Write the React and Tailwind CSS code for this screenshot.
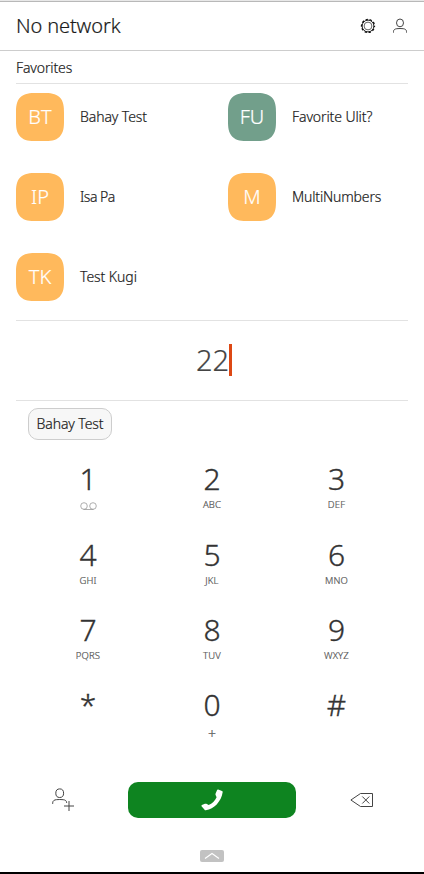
import React from "react";

const favorites = [
  { initials: "BT", name: "Bahay Test", color: "bg-[#ffb95c]", track: "tracking-[-0.1px]" },
  { initials: "FU", name: "Favorite Ulit?", color: "bg-[#729f8b]", track: "tracking-[-0.1px]" },
  { initials: "IP", name: "Isa Pa", color: "bg-[#ffb95c]", track: "tracking-[-0.5px]" },
  { initials: "M", name: "MultiNumbers", color: "bg-[#ffb95c]", track: "tracking-[-0.16px]" },
  { initials: "TK", name: "Test Kugi", color: "bg-[#ffb95c]", track: "tracking-[-0.06px]" },
];

const keys = [
  ["1", "voicemail"],
  ["2", "ABC"],
  ["3", "DEF"],
  ["4", "GHI"],
  ["5", "JKL"],
  ["6", "MNO"],
  ["7", "PQRS"],
  ["8", "TUV"],
  ["9", "WXYZ"],
  ["*", ""],
  ["0", "+"],
  ["#", ""],
];

function GearIcon() {
  return (
    <svg className="size-4" viewBox="0 0 16 16" fill="none">
      <circle cx="8" cy="8" r="5.9" stroke="#222" strokeWidth="1" />
      <circle cx="8" cy="8" r="6.500" stroke="#111" strokeWidth="1.300" strokeDasharray="2.300 1.780" strokeDashoffset="1.150" />
      <circle cx="8" cy="8" r="3.900" stroke="#555" strokeWidth="0.9" />
    </svg>
  );
}

function PersonIcon() {
  return (
    <svg className="size-4" viewBox="0 0 16 16" fill="none" stroke="#444" strokeWidth="1">
      <ellipse cx="8" cy="4.900" rx="3.500" ry="3.900" />
      <path d="M1.500 14.600v-1c0-2 1.600-2.700 3.300-2.900 2.100-.25 4.300-.25 6.400 0 1.700.2 3.300.9 3.300 2.900v1" />
    </svg>
  );
}

function VoicemailIcon() {
  return (
    <svg className="mt-[3px] h-[9px] w-[17px]" viewBox="0 0 17 9" fill="none" stroke="#999" strokeWidth="0.8">
      <circle cx="4" cy="4" r="3.300" />
      <circle cx="13" cy="4" r="3.300" />
      <path d="M3.500 7.500h10" />
    </svg>
  );
}

function AddContactIcon() {
  return (
    <svg className="h-6 w-6" viewBox="0 0 24 24" fill="none" stroke="#444" strokeWidth="1">
      <ellipse cx="9.700" cy="5.200" rx="3.900" ry="4.300" />
      <path d="M2.700 15.900v-1c0-2.200 1.700-3 3.600-3.200 2.200-.25 4.700-.25 6.900 0 1.900.2 3.500 1 3.500 3.200" />
      <path d="M19 13v10M14 18h10" />
    </svg>
  );
}

function BackspaceIcon() {
  return (
    <svg className="h-4 w-6" viewBox="0 0 24 16" fill="none" stroke="#444" strokeWidth="1">
      <path d="M.9 8 10.500 1.500h12v13h-12z" />
      <path d="m12.300 4.500 7 7m0-7-7 7" />
    </svg>
  );
}

function HandsetIcon() {
  return (
    <svg className="size-6" viewBox="0 0 24 24" fill="#fff">
      <path d="M18.200 1.500 22 2.900c.6.2.8.6.7 1.200C22 8.800 20 13 16.700 16.400c-3 3-6.600 5-10.900 5.900-.6.1-1-.1-1.200-.6L1.500 18.300c-.2-.5 0-.9.400-1.200l3-1.300c.7-.3 1.400-.1 2 .3l1.700 1c3.700-1.600 6.300-4.200 8-7.900l-.9-1.900c-.3-.6-.4-1.200-.1-1.900l1.400-3.200c.2-.5.7-.8 1.200-.6Z" />
    </svg>
  );
}

export default function App() {
  return (
    <div className="flex h-[874px] w-[424px] flex-col overflow-hidden border-b-2 border-black bg-white font-['Noto_Sans',sans-serif] font-light text-[#1a1a1a] [-webkit-text-stroke:0.2px]">
      <div className="h-0.5 shrink-0 border-b border-[#b8b8b8] bg-[#e8e8e8]" />
      <header className="flex h-[49px] shrink-0 items-center border-b border-[#cdcdcd] pr-4 pl-4">
        <h1 className="grow text-[20px] leading-6 font-light tracking-[-0.12px]">No network</h1>
        <div className="flex gap-4">
          <GearIcon />
          <PersonIcon />
        </div>
      </header>

      <section className="mx-4 h-[270px] shrink-0 border-b border-[#e2e2e2]">
        <h2 className="h-[33px] border-b border-[#e2e2e2] pt-[7px] text-[14px] leading-5 font-light tracking-[-0.12px]">Favorites</h2>
        <div className="grid grid-cols-[212px_180px] gap-y-8 pt-[9px]">
          {favorites.map((f) => (
            <div key={f.name} className="flex items-center gap-4">
              <div className={`flex size-12 items-center justify-center rounded-[20px] text-[20px] text-white [corner-shape:superellipse(1.5)] ${f.color}`}>
                {f.initials}
              </div>
              <span className={`pb-[2px] text-[14px] whitespace-nowrap ${f.track}`}>{f.name}</span>
            </div>
          ))}
        </div>
      </section>

      <div className="mx-4 flex h-20 shrink-0 items-center justify-center border-b border-[#e2e2e2] pb-px">
        <span className="pl-1 text-[29px] leading-8 text-[#444]">22</span>
        <span className="h-8 w-[3px] bg-[#dd4814]" />
      </div>

      <div className="flex h-[60px] shrink-0 pt-[7px] pl-7">
        <button className="h-8 w-[84px] rounded-[10px] border border-[#cdcdcd] bg-[#f7f7f7] pb-[2px] text-[14px] font-light tracking-[-0.1px] whitespace-nowrap">
          Bahay Test
        </button>
      </div>

      <div className="grid shrink-0 grid-cols-[124px_124px_125px] grid-rows-[76px_75px_75px_75px] px-[26px]">
        {keys.map(([digit, label]) => (
          <div key={digit} className="flex flex-col items-center">
            <span className="h-9 text-[30px] leading-9 text-[#333] [-webkit-text-stroke:0.35px]">{digit}</span>
            <span className={`flex h-4 items-center leading-4 text-[#555] ${label === "+" ? "pt-[5px] text-[14px]" : "pb-px text-[9.5px] tracking-[0.15px]"}`}>
              {label === "voicemail" ? <VoicemailIcon /> : label}
            </span>
          </div>
        ))}
      </div>

      <div className="mt-5 flex h-9 shrink-0 items-center pr-[50px] pl-[50px]">
        <AddContactIcon />
        <button className="ml-[54px] flex h-9 w-[168px] items-center justify-center rounded-[10px] bg-[#0e8420]">
          <HandsetIcon />
        </button>
        <span className="ml-[54px]">
          <BackspaceIcon />
        </span>
      </div>

      <div className="mt-8 flex justify-center">
        <div className="flex h-3 w-6 items-center justify-center rounded-[2px] bg-[#c2c2c2]">
          <svg className="h-2 w-4" viewBox="0 0 16 8" fill="none" stroke="#fff" strokeWidth="1.200">
            <path d="M1 6.500 8 1.500l7 5" />
          </svg>
        </div>
      </div>
    </div>
  );
}
